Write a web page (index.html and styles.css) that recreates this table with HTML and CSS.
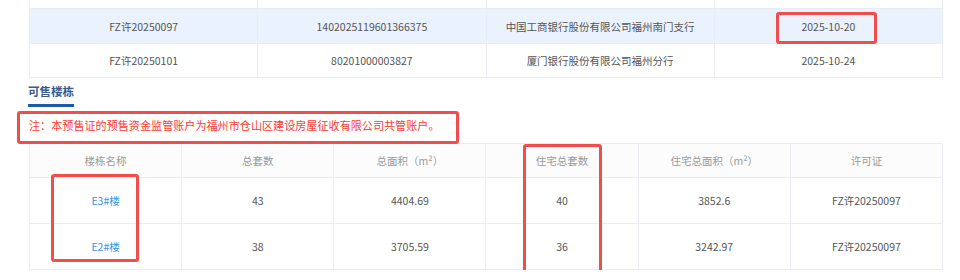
FILE: index.html
```html
<!DOCTYPE html>
<html lang="zh-CN">
<head>
<meta charset="utf-8">
<title>可售楼栋</title>
<link rel="stylesheet" href="styles.css">
</head>
<body>
<div class="page">
  <table class="grid grid-top">
    <tbody>
      <tr><td></td><td></td><td></td><td></td></tr>
      <tr class="hl">
        <td>FZ许20250097</td>
        <td>1402025119601366375</td>
        <td>中国工商银行股份有限公司福州南门支行</td>
        <td class="anchor">2025-10-20<span class="mark mark-date"></span></td>
      </tr>
      <tr class="last">
        <td>FZ许20250101</td>
        <td>80201000003827</td>
        <td>厦门银行股份有限公司福州分行</td>
        <td>2025-10-24</td>
      </tr>
    </tbody>
  </table>

  <div class="tabs"><span class="tab">可售楼栋</span></div>

  <div class="note">注：本预售证的预售资金监管账户为福州市仓山区建设房屋征收有限公司共管账户。<span class="mark mark-note"></span></div>

  <table class="grid grid-bottom">
    <thead>
      <tr>
        <th>楼栋名称</th>
        <th>总套数</th>
        <th>总面积（m²）</th>
        <th class="anchor">住宅总套数<span class="mark mark-col"></span></th>
        <th>住宅总面积（m²）</th>
        <th>许可证</th>
      </tr>
    </thead>
    <tbody>
      <tr>
        <td class="anchor"><a class="link" href="#">E3#楼</a><span class="mark mark-name"></span></td>
        <td>43</td>
        <td>4404.69</td>
        <td>40</td>
        <td>3852.6</td>
        <td>FZ许20250097</td>
      </tr>
      <tr>
        <td><a class="link" href="#">E2#楼</a></td>
        <td>38</td>
        <td>3705.59</td>
        <td>36</td>
        <td>3242.97</td>
        <td>FZ许20250097</td>
      </tr>
    </tbody>
  </table>
</div>
</body>
</html>
```
FILE: styles.css
```css
html, body {
  margin: 0;
  padding: 0;
  background: #ffffff;
}

body {
  font-family: "Noto Sans CJK SC", "Microsoft YaHei", sans-serif;
  color: #555;
  overflow: hidden;
}

.page {
  width: 914px;
  margin: -27px 0 0 29px;
}

.grid {
  width: 914px;
  border-collapse: collapse;
  table-layout: fixed;
  border: 1px solid #e9ecf2;
}

.grid td,
.grid th {
  border: 1px solid #e9ecf2;
  padding: 0;
  text-align: center;
  font-size: 10.5px;
  font-weight: normal;
  color: #555;
}

.grid-top td {
  height: 34px;
}

.grid-top tr.last td {
  height: 33px;
}

.grid-top tr.hl td {
  background: #eaf2fd;
}

.grid-bottom th {
  height: 33px;
  color: #9a9a9a;
  background: #fcfcfd;
}

.grid-bottom td {
  height: 45px;
}

.anchor {
  position: relative;
}

.link {
  color: #3a8ee6;
  text-decoration: none;
}

.tabs {
  height: 29px;
  display: flex;
  align-items: flex-end;
}

.tab {
  display: block;
  padding: 0 0 6px;
  margin-left: -1px;
  font-size: 11.5px;
  font-weight: bold;
  color: #3a5a8c;
  line-height: 14px;
  border-bottom: 3px solid #1f5aa8;
  width: 46px;
}

.note {
  position: relative;
  height: 32px;
  margin-top: 4px;
  line-height: 28px;
  font-size: 11.1px;
  color: #ff3b30;
  white-space: nowrap;
}

.mark {
  position: absolute;
  box-sizing: border-box;
  border: 3px solid #f24d4d;
  border-radius: 3px;
  z-index: 2;
  pointer-events: none;
}

.mark-date {
  left: 61px;
  top: 3px;
  width: 101px;
  height: 32px;
}

.mark-note {
  left: -12px;
  top: 0;
  width: 442px;
  height: 33px;
}

.mark-col {
  left: 37px;
  top: 0;
  width: 79px;
  height: 130px;
}

.mark-name {
  left: 21px;
  top: -4px;
  width: 88px;
  height: 88px;
}
```
